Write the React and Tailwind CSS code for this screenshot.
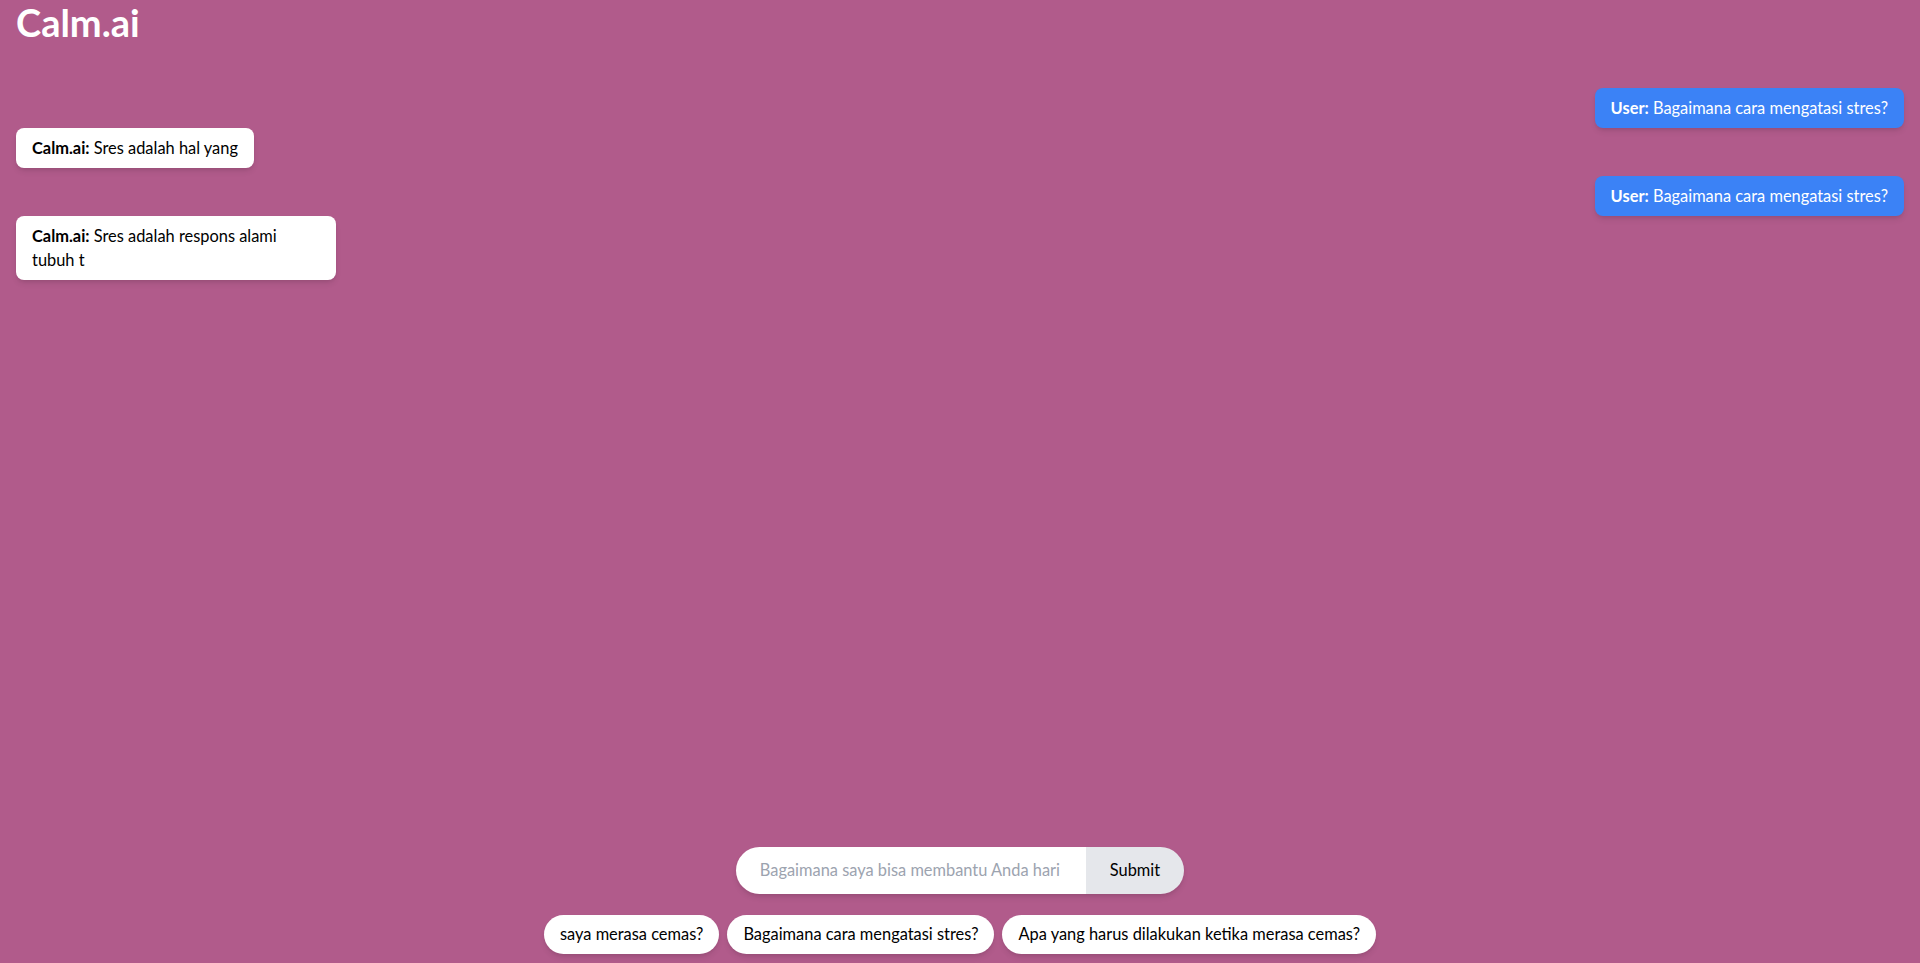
export default function App() {
  const font = { fontFamily: '"Lato", "Noto Sans", sans-serif' };
  return (
    <div
      className="h-screen w-full bg-[#b15b8b] flex flex-col overflow-hidden text-[16.4px]"
      style={font}
    >
      <h1 className="text-[38px] leading-[44px] font-bold text-white px-4">Calm.ai</h1>

      <div className="flex-1 px-4 mt-[44px] flex flex-col gap-2">
        <div className="flex flex-col">
          <div className="flex justify-end">
            <div className="bg-[#3b82f6] text-white rounded-lg shadow-md px-4 py-2 leading-6 max-w-xs">
              <span className="font-bold">User:</span> Bagaimana cara mengatasi stres?
            </div>
          </div>
          <div className="flex justify-start">
            <div className="bg-white text-black rounded-lg shadow-md px-4 py-2 leading-6 max-w-xs">
              <span className="font-bold">Calm.ai:</span> Sres adalah hal yang
            </div>
          </div>
        </div>
        <div className="flex flex-col">
          <div className="flex justify-end">
            <div className="bg-[#3b82f6] text-white rounded-lg shadow-md px-4 py-2 leading-6 max-w-xs">
              <span className="font-bold">User:</span> Bagaimana cara mengatasi stres?
            </div>
          </div>
          <div className="flex justify-start">
            <div className="bg-white text-black rounded-lg shadow-md px-4 py-2 leading-6 w-xs">
              <span className="font-bold">Calm.ai:</span> Sres adalah respons alami tubuh t
            </div>
          </div>
        </div>
      </div>

      <div className="flex justify-center">
        <div className="flex rounded-full shadow-md h-[47px]">
          <input
            className="w-[350px] bg-white rounded-l-full px-6 text-[16.4px] text-black placeholder:text-[#9ca3af] outline-none"
            placeholder="Bagaimana saya bisa membantu Anda hari ini?"
            style={font}
          />
          <button className="bg-[#e5e7eb] rounded-r-full px-6 text-[16.4px] text-black" style={font}>
            Submit
          </button>
        </div>
      </div>

      <div className="flex justify-center gap-2 mt-[21px] pb-[9px]">
        {[
          "saya merasa cemas?",
          "Bagaimana cara mengatasi stres?",
          "Apa yang harus dilakukan ketika merasa cemas?",
        ].map((t) => (
          <button
            key={t}
            className="bg-white text-black rounded-full shadow-md px-4 h-[39px] text-[16.4px]"
            style={font}
          >
            {t}
          </button>
        ))}
      </div>
    </div>
  );
}
